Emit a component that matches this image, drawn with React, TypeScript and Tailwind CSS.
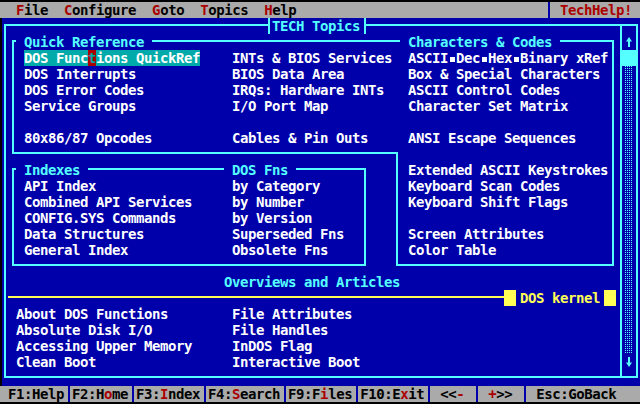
import React from 'react';

function Red({ children }: { children: React.ReactNode }) {
  return <span className="text-[#aa0000]">{children}</span>;
}

function Sq() {
  return (
    <span className="inline-flex w-[8px] h-[16px] justify-center items-center pt-[3px] align-top">
      <span className="w-[5px] h-[5px] bg-white" />
    </span>
  );
}

function UpArrow() {
  return (
    <svg width="8" height="16" viewBox="0 0 8 16" className="block">
      <polygon points="5,3 8,7.5 2,7.5" fill="#55ffff" />
      <rect x="4" y="7" width="2" height="6" fill="#55ffff" />
    </svg>
  );
}

function DownArrow() {
  return (
    <svg width="8" height="16" viewBox="0 0 8 16" className="block">
      <rect x="4" y="3" width="2" height="6" fill="#55ffff" />
      <polygon points="5,13 8,8.5 2,8.5" fill="#55ffff" />
    </svg>
  );
}

export default function App() {
  return (
    <div className="w-[640px] h-[404px] overflow-hidden bg-black pt-[2px] font-['DejaVu_Sans_Mono','Liberation_Mono',monospace] font-bold text-[14px] tracking-[-0.4287px] leading-[17px]">
      <div className="grid grid-cols-[repeat(80,8px)] grid-rows-[repeat(25,16px)] bg-[#0000aa] text-white">
        {/* Menu bar */}
        <div className="col-start-1 col-end-81 row-start-1 bg-[#aaaaaa] text-black whitespace-pre">
          {'  '}<Red>F</Red>ile{'  '}<Red>C</Red>onfigure{'  '}<Red>G</Red>oto{'  '}<Red>T</Red>opics{'  '}<Red>H</Red>elp
        </div>
        <div className="col-start-69 row-start-1 pl-[4px]">
          <div className="w-[2px] h-full bg-[#0000aa]" />
        </div>
        <div className="col-start-71 row-start-1 whitespace-pre text-[#aa0000]">TechHelp!</div>

        {/* Main window frame */}
        <div className="col-start-1 col-end-81 row-start-2 row-end-25 pt-[6px] pb-[8px] pl-[4px] pr-[2px]">
          <div className="h-full border-2 border-[#55ffff]" />
        </div>
        <div className="col-start-78 row-start-2 row-end-25 pt-[6px] pb-[8px] pl-[4px]">
          <div className="w-[2px] h-full bg-[#55ffff]" />
        </div>
        <div className="col-start-1 row-start-2 row-end-25 w-[2px] bg-black" />

        {/* Window title */}
        <div className="col-start-34 col-end-47 row-start-2 flex">
          <div className="w-[4px]" />
          <div className="w-[4px] border-l-2 border-[#55ffff] bg-[#0000aa]" />
          <span className="w-[88px] whitespace-pre bg-[#0000aa] text-[#55ffff]">TECH Topics</span>
          <div className="w-[6px] border-r-2 border-[#55ffff] bg-[#0000aa]" />
        </div>

        {/* Boxes */}
        <div className="col-start-2 col-end-51 row-start-3 row-end-11 pt-[6px] pb-[8px] pl-[4px] pr-[2px]">
          <div className="h-full border-t-2 border-l-2 border-b-2 border-[#55ffff]" />
        </div>
        <div className="col-start-50 col-end-78 row-start-3 row-end-18 pt-[6px] pb-[8px] pl-[4px] pr-[2px]">
          <div className="h-full border-t-2 border-r-2 border-b-2 border-[#55ffff]" />
        </div>
        <div className="col-start-50 row-start-10 row-end-18 pt-[6px] pb-[8px] pl-[4px]">
          <div className="w-[2px] h-full bg-[#55ffff]" />
        </div>
        <div className="col-start-2 col-end-47 row-start-11 row-end-18 pt-[6px] pb-[8px] pl-[4px] pr-[2px]">
          <div className="h-full border-2 border-[#55ffff]" />
        </div>

        {/* Box titles */}
        <div className="col-start-3 col-end-20 row-start-3 whitespace-pre bg-[#0000aa] text-[#55ffff]"> Quick Reference </div>
        <div className="col-start-51 col-end-71 row-start-3 whitespace-pre bg-[#0000aa] text-[#55ffff]"> Characters &amp; Codes </div>
        <div className="col-start-3 col-end-12 row-start-11 whitespace-pre bg-[#0000aa] text-[#55ffff]"> Indexes </div>
        <div className="col-start-29 col-end-38 row-start-11 whitespace-pre bg-[#0000aa] text-[#55ffff]"> DOS Fns </div>

        {/* Quick Reference */}
        <div className="col-start-4 row-start-4 whitespace-pre">
          <span className="bg-[#00aaaa] inline-block h-[16px] align-top">DOS Func<span className="bg-[#aa0000] text-[#00aaaa] inline-block h-[16px] align-top">t</span>ions QuickRef</span>
        </div>
        <div className="col-start-4 row-start-5 whitespace-pre">DOS Interrupts</div>
        <div className="col-start-4 row-start-6 whitespace-pre">DOS Error Codes</div>
        <div className="col-start-4 row-start-7 whitespace-pre">Service Groups</div>
        <div className="col-start-4 row-start-9 whitespace-pre">80x86/87 Opcodes</div>

        <div className="col-start-30 row-start-4 whitespace-pre">INTs &amp; BIOS Services</div>
        <div className="col-start-30 row-start-5 whitespace-pre">BIOS Data Area</div>
        <div className="col-start-30 row-start-6 whitespace-pre">IRQs: Hardware INTs</div>
        <div className="col-start-30 row-start-7 whitespace-pre">I/O Port Map</div>
        <div className="col-start-30 row-start-9 whitespace-pre">Cables &amp; Pin Outs</div>

        {/* Characters & Codes */}
        <div className="col-start-52 row-start-4 whitespace-pre">
          ASCII<Sq />Dec<Sq />Hex<Sq />Binary xRef
        </div>
        <div className="col-start-52 row-start-5 whitespace-pre">Box &amp; Special Characters</div>
        <div className="col-start-52 row-start-6 whitespace-pre">ASCII Control Codes</div>
        <div className="col-start-52 row-start-7 whitespace-pre">Character Set Matrix</div>
        <div className="col-start-52 row-start-9 whitespace-pre">ANSI Escape Sequences</div>
        <div className="col-start-52 row-start-11 whitespace-pre">Extended ASCII Keystrokes</div>
        <div className="col-start-52 row-start-12 whitespace-pre">Keyboard Scan Codes</div>
        <div className="col-start-52 row-start-13 whitespace-pre">Keyboard Shift Flags</div>
        <div className="col-start-52 row-start-15 whitespace-pre">Screen Attributes</div>
        <div className="col-start-52 row-start-16 whitespace-pre">Color Table</div>

        {/* Indexes */}
        <div className="col-start-4 row-start-12 whitespace-pre">API Index</div>
        <div className="col-start-4 row-start-13 whitespace-pre">Combined API Services</div>
        <div className="col-start-4 row-start-14 whitespace-pre">CONFIG.SYS Commands</div>
        <div className="col-start-4 row-start-15 whitespace-pre">Data Structures</div>
        <div className="col-start-4 row-start-16 whitespace-pre">General Index</div>

        <div className="col-start-30 row-start-12 whitespace-pre">by Category</div>
        <div className="col-start-30 row-start-13 whitespace-pre">by Number</div>
        <div className="col-start-30 row-start-14 whitespace-pre">by Version</div>
        <div className="col-start-30 row-start-15 whitespace-pre">Superseded Fns</div>
        <div className="col-start-30 row-start-16 whitespace-pre">Obsolete Fns</div>

        {/* Overviews and Articles */}
        <div className="col-start-29 row-start-18 whitespace-pre text-[#55ffff]">Overviews and Articles</div>
        <div className="col-start-2 col-end-64 row-start-19 pt-[6px]">
          <div className="h-[2px] bg-[#ffff55]" />
        </div>
        <div className="col-start-64 col-end-78 row-start-19 flex text-[#ffff55]">
          <div className="w-[12px] bg-[#ffff55]" />
          <div className="w-[4px]" />
          <span className="w-[80px] whitespace-pre">DOS kernel</span>
          <div className="w-[4px]" />
          <div className="w-[12px] bg-[#ffff55]" />
        </div>

        <div className="col-start-3 row-start-20 whitespace-pre">About DOS Functions</div>
        <div className="col-start-3 row-start-21 whitespace-pre">Absolute Disk I/O</div>
        <div className="col-start-3 row-start-22 whitespace-pre">Accessing Upper Memory</div>
        <div className="col-start-3 row-start-23 whitespace-pre">Clean Boot</div>

        <div className="col-start-30 row-start-20 whitespace-pre">File Attributes</div>
        <div className="col-start-30 row-start-21 whitespace-pre">File Handles</div>
        <div className="col-start-30 row-start-22 whitespace-pre">InDOS Flag</div>
        <div className="col-start-30 row-start-23 whitespace-pre">Interactive Boot</div>

        {/* Scroll bar */}
        <div className="col-start-79 row-start-3"><UpArrow /></div>
        <div className="col-start-79 row-start-4">
          <div className="ml-[-2px] w-[14px] h-full bg-[#55ffff]" />
        </div>
        <div className="col-start-79 row-start-5 row-end-23 bg-[conic-gradient(#55ffff_25%,transparent_0)] bg-[length:2px_2px]" />
        <div className="col-start-79 row-start-23"><DownArrow /></div>

        {/* Function key bar */}
        <div className="col-start-1 col-end-81 row-start-25 bg-[#aaaaaa] text-black whitespace-pre">
          {' F1:Help F2:H'}<Red>o</Red>{'me F3:'}<Red>I</Red>{'ndex F4:'}<Red>S</Red>{'earch F9:F'}<Red>i</Red>{'les F10:E'}<Red>x</Red>{'it  <<'}<Red>-</Red>{'   '}<Red>+</Red>{'>>   Esc:GoBack'}
        </div>
        <div className="col-start-9 row-start-25 pl-[4px]"><div className="w-[2px] h-full bg-[#0000aa]" /></div>
        <div className="col-start-17 row-start-25 pl-[4px]"><div className="w-[2px] h-full bg-[#0000aa]" /></div>
        <div className="col-start-26 row-start-25 pl-[4px]"><div className="w-[2px] h-full bg-[#0000aa]" /></div>
        <div className="col-start-36 row-start-25 pl-[4px]"><div className="w-[2px] h-full bg-[#0000aa]" /></div>
        <div className="col-start-45 row-start-25 pl-[4px]"><div className="w-[2px] h-full bg-[#0000aa]" /></div>
        <div className="col-start-54 row-start-25 pl-[4px]"><div className="w-[2px] h-full bg-[#0000aa]" /></div>
        <div className="col-start-60 row-start-25 pl-[4px]"><div className="w-[2px] h-full bg-[#0000aa]" /></div>
        <div className="col-start-66 row-start-25 pl-[4px]"><div className="w-[2px] h-full bg-[#0000aa]" /></div>
      </div>
    </div>
  );
}
